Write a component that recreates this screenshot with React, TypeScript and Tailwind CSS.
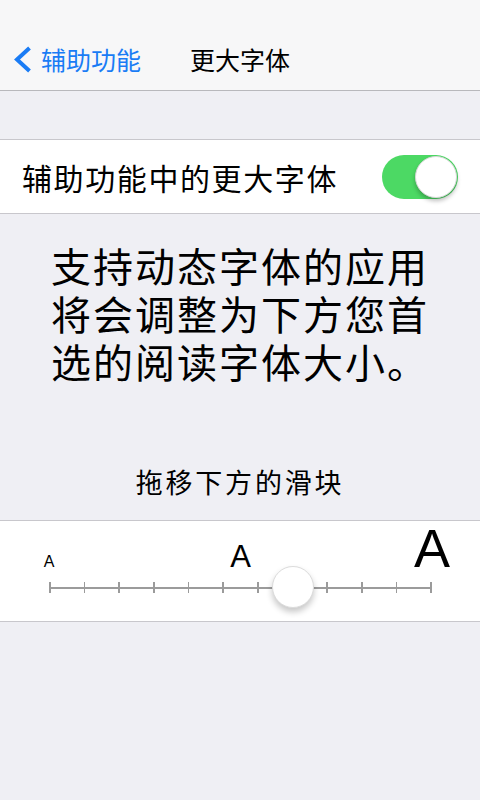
import React, { useState } from 'react';

const cjk = '"Noto Sans CJK SC", "Noto Sans", sans-serif';
const latin = '"Liberation Sans", Arial, sans-serif';

const STEPS = 12;

const Toggle: React.FC<{ on: boolean; onChange: (v: boolean) => void }> = ({ on, onChange }) => (
  <button
    onClick={() => onChange(!on)}
    className={`flex items-center w-[76px] h-[44px] rounded-full p-[1px] transition-colors ${
      on ? 'bg-[#4cd964] justify-end' : 'bg-[#e5e5ea] justify-start'
    }`}
  >
    <span className="block w-[42px] h-[42px] rounded-full bg-white border border-[#d8d8d8] shadow-[0_3px_4px_rgba(0,0,0,0.25)]" />
  </button>
);

const FontSlider: React.FC = () => {
  const [step, setStep] = useState(7);
  const trackWidth = 383;
  const left = (step / (STEPS - 1)) * trackWidth;

  return (
    <div className="bg-white border-y border-[#c8c7cc] h-[102px] pl-[49px]" style={{ fontFamily: latin }}>
      <div className="w-[383px] flex justify-between items-baseline h-[54px] text-black">
        <div className="w-0 flex justify-center">
          <span className="text-[16px] leading-none">A</span>
        </div>
        <div className="w-0 flex justify-center">
          <span className="text-[31px] leading-none">A</span>
        </div>
        <div className="w-0 flex justify-center">
          <span className="text-[54px] leading-none">A</span>
        </div>
      </div>
      <div className="relative w-[383px] h-[11px] mt-[7px]">
        <div className="absolute left-0 right-0 top-[5px] h-[1.5px] bg-[#9b9b9b]" />
        <div className="absolute inset-0 flex justify-between">
          {Array.from({ length: STEPS }).map((_, i) => (
            <button
              key={i}
              onClick={() => setStep(i)}
              className="w-[1.5px] h-[11px] bg-[#9b9b9b]"
            />
          ))}
        </div>
        <div
          className="absolute top-[-16px] w-[42px] h-[42px] -ml-[21px] rounded-full bg-white border border-[#dcdcdc] shadow-[0_4px_6px_rgba(0,0,0,0.22)]"
          style={{ left }}
        />
      </div>
    </div>
  );
};

const lines = ['支持动态字体的应用', '将会调整为下方您首', '选的阅读字体大小。'];

export default function App() {
  const [largerText, setLargerText] = useState(true);

  return (
    <div className="w-[480px] h-[800px] bg-[#efeff4] flex flex-col" style={{ fontFamily: cjk }}>
      {/* navigation bar */}
      <div className="bg-[#f7f7f8] border-b border-[#b8b8bc] pt-[34px] h-[91px]">
        <div className="grid grid-cols-[1fr_auto_1fr] items-center h-[50px]">
          <div className="flex items-center pl-[13px] text-[#1a7cf5]">
            <svg width="19" height="27" viewBox="0 0 19 27" fill="none">
              <path d="M16.5 2 L4 13.5 L16.5 25" stroke="#1a7cf5" strokeWidth="4" strokeLinecap="butt" strokeLinejoin="miter" />
            </svg>
            <span className="ml-[9px] text-[25px] leading-none">辅助功能</span>
          </div>
          <span className="text-[25px] leading-none text-black">更大字体</span>
          <div />
        </div>
      </div>

      {/* toggle row */}
      <div className="mt-[48px] bg-white border-y border-[#c8c7cc] h-[75px] flex items-center justify-between pl-[22px] pr-[22px]">
        <span className="text-[30px] tracking-[1.6px] text-black leading-none">辅助功能中的更大字体</span>
        <Toggle on={largerText} onChange={setLargerText} />
      </div>

      {/* description */}
      <div className="pt-[27px] pl-[51px] flex flex-col text-black">
        {lines.map((line) => (
          <div key={line} className="h-[48px] flex items-center">
            <span className="text-[40px] leading-[40px] tracking-[2px]">{line}</span>
          </div>
        ))}
      </div>

      <div className="mt-[77px] h-[40px] flex items-center justify-center text-[27px] tracking-[2.8px] text-black">
        拖移下方的滑块
      </div>

      <div className="mt-[18px]">
        <FontSlider />
      </div>
    </div>
  );
}
